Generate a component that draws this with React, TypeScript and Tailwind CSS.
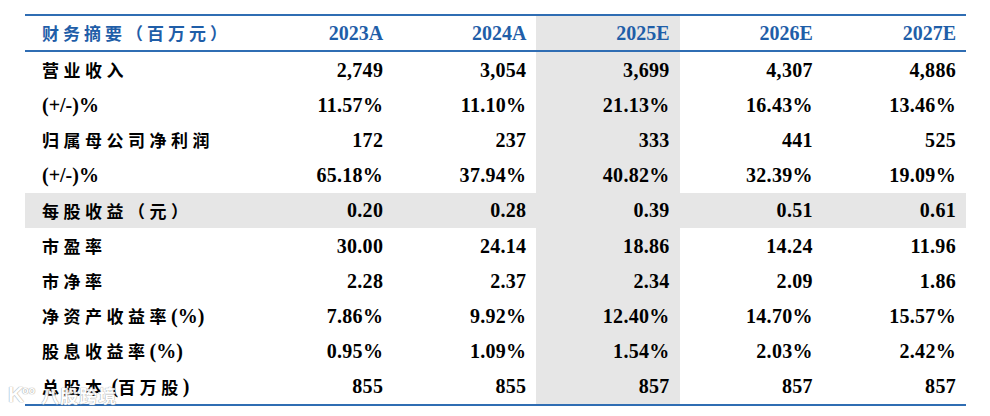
const years = ["2023A", "2024A", "2025E", "2026E", "2027E"];

type Row = { label: string; values: string[]; shaded?: boolean };

const rows: Row[] = [
  { label: "营业收入", values: ["2,749", "3,054", "3,699", "4,307", "4,886"] },
  { label: "(+/-)%", values: ["11.57%", "11.10%", "21.13%", "16.43%", "13.46%"] },
  { label: "归属母公司净利润", values: ["172", "237", "333", "441", "525"] },
  { label: "(+/-)%", values: ["65.18%", "37.94%", "40.82%", "32.39%", "19.09%"] },
  { label: "每股收益（元）", values: ["0.20", "0.28", "0.39", "0.51", "0.61"], shaded: true },
  { label: "市盈率", values: ["30.00", "24.14", "18.86", "14.24", "11.96"] },
  { label: "市净率", values: ["2.28", "2.37", "2.34", "2.09", "1.86"] },
  { label: "净资产收益率(%)", values: ["7.86%", "9.92%", "12.40%", "14.70%", "15.57%"] },
  { label: "股息收益率(%)", values: ["0.95%", "1.09%", "1.54%", "2.03%", "2.42%"] },
  { label: "总股本 (百万股)", values: ["855", "855", "857", "857", "857"] },
];

// CJK parts get wide spacing, latin parts are set in Times-like serif
const Label = ({ text }: { text: string }) => {
  const parts = text.split(/([\x20-\x7E]+)/).filter((p) => p !== "");
  return (
    <>
      {parts.map((p, i) =>
        /^[\x20-\x7E]+$/.test(p) ? (
          <span key={i} className="text-[20px] font-['Liberation_Serif',serif] whitespace-pre">
            {p}
          </span>
        ) : (
          <span
            key={i}
            className="text-[17px] tracking-[4.5px]"
            style={{ fontFamily: '"Noto Sans CJK SC", sans-serif' }}
          >
            {p}
          </span>
        )
      )}
    </>
  );
};

const App = () => {
  return (
    <div className="relative w-[990px] h-[416px] bg-white overflow-hidden">
      <div className="ml-[25px] mt-[14px] w-[941px] border-t-2 border-b-2 border-[#2f6db3]">
        {/* Header */}
        <div className="grid grid-cols-[225px_repeat(5,1fr)] h-[36px] border-b-2 border-[#2f6db3] text-[#1f5ea8] font-bold">
          <div
            className="flex items-center pl-[17px] text-[17px] tracking-[4px]"
            style={{ fontFamily: '"Noto Sans CJK SC", sans-serif' }}
          >
            财务摘要（百万元）
          </div>
          {years.map((y, i) => (
            <div
              key={y}
              className={
                "flex items-center justify-end pr-[10px] text-[20px] font-['Liberation_Serif',serif] " +
                (i === 2 ? "bg-[#e6e6e6]" : "")
              }
            >
              {y}
            </div>
          ))}
        </div>

        {/* Rows */}
        {rows.map((row, r) => (
          <div
            key={r}
            className={
              "grid grid-cols-[225px_repeat(5,1fr)] h-[35.2px] font-bold text-black " +
              (row.shaded ? "bg-[#e6e6e6]" : "")
            }
          >
            <div className="flex items-center pl-[17px] whitespace-nowrap">
              <Label text={row.label} />
            </div>
            {row.values.map((v, i) => (
              <div
                key={i}
                className={
                  "flex items-center justify-end pr-[10px] text-[20px] tracking-[0.3px] font-['Liberation_Serif',serif] " +
                  (i === 2 ? "bg-[#e6e6e6]" : "")
                }
              >
                {v}
              </div>
            ))}
          </div>
        ))}
      </div>

      {/* Watermark */}
      <div className="absolute left-[8px] top-[384px] flex items-center gap-[6px] leading-none text-white font-bold opacity-90 [text-shadow:0_0_1px_#9a9a9a,0_0_1px_#9a9a9a]">
        <span className="text-[22px] font-['Liberation_Sans',sans-serif]">K</span>
        <span className="text-[11px] -ml-[8px] -mt-[10px] font-['Liberation_Sans',sans-serif]">oo</span>
        <span
          className="text-[18px] tracking-[1px]"
          style={{ fontFamily: '"Noto Sans CJK SC", sans-serif' }}
        >
          八股跨境
        </span>
      </div>
    </div>
  );
};

export default App;
